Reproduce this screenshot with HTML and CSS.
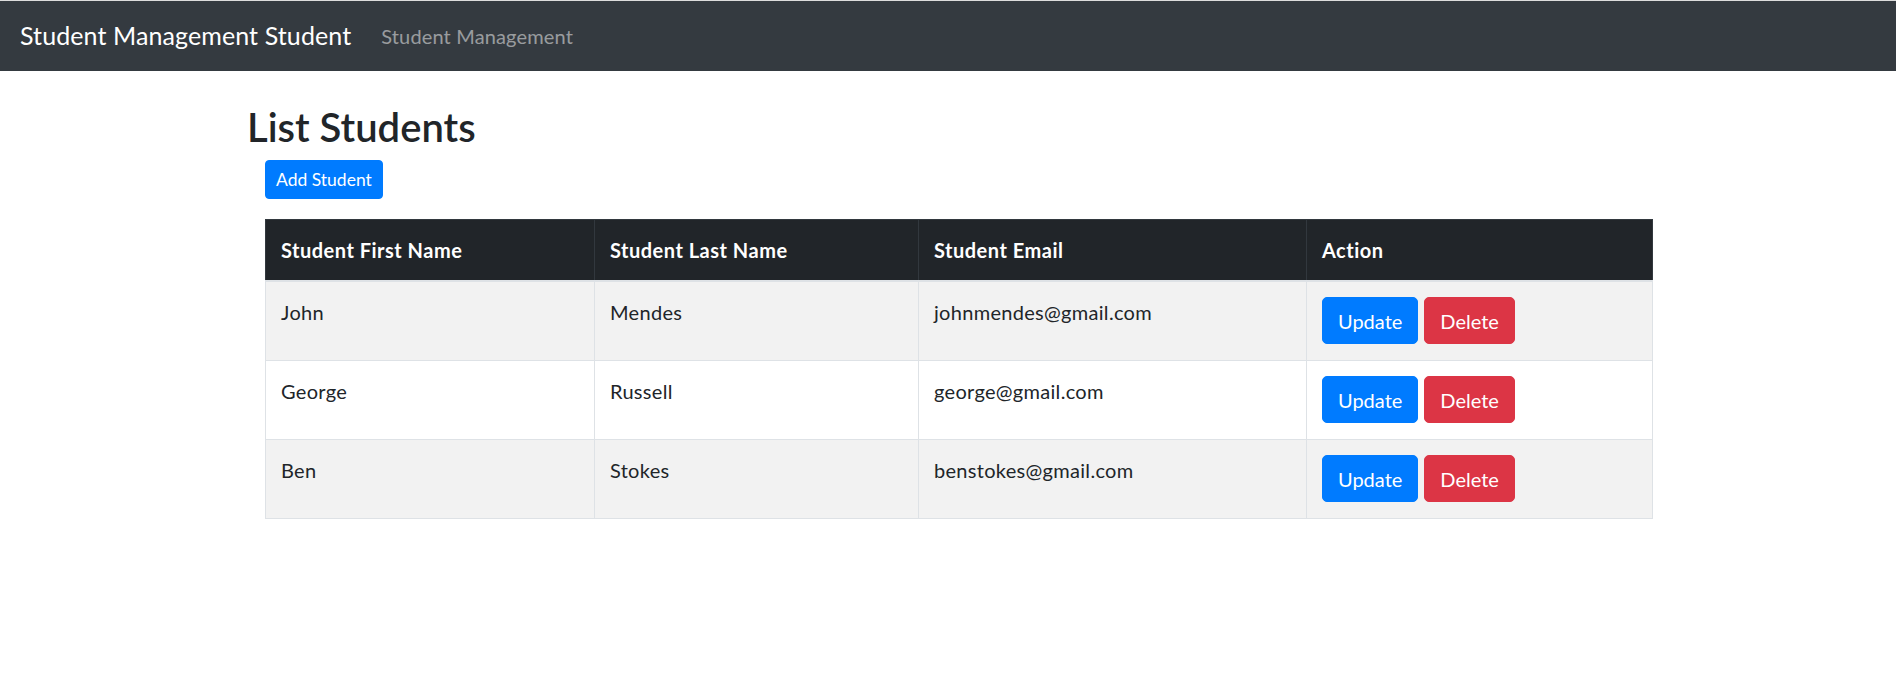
FILE: index.html
```html
<!DOCTYPE html>
<html lang="en">
<head>
<meta charset="utf-8">
<title>Student Management</title>
<link rel="stylesheet" href="styles.css">
</head>
<body>
<header class="navbar">
  <a class="brand" href="#">Student Management Student</a>
  <a class="nav-link" href="#">Student Management</a>
</header>
<main class="container">
  <h1 class="title">List Students</h1>
  <div class="content">
    <button class="btn btn-primary btn-sm">Add Student</button>
    <table class="table">
      <colgroup>
        <col class="c1"><col class="c2"><col class="c3"><col class="c4">
      </colgroup>
      <thead>
        <tr>
          <th>Student First Name</th>
          <th>Student Last Name</th>
          <th>Student Email</th>
          <th>Action</th>
        </tr>
      </thead>
      <tbody>
        <tr>
          <td>John</td>
          <td>Mendes</td>
          <td>johnmendes@gmail.com</td>
          <td><div class="actions"><button class="btn btn-primary">Update</button><button class="btn btn-danger">Delete</button></div></td>
        </tr>
        <tr>
          <td>George</td>
          <td>Russell</td>
          <td>george@gmail.com</td>
          <td><div class="actions"><button class="btn btn-primary">Update</button><button class="btn btn-danger">Delete</button></div></td>
        </tr>
        <tr>
          <td>Ben</td>
          <td>Stokes</td>
          <td>benstokes@gmail.com</td>
          <td><div class="actions"><button class="btn btn-primary">Update</button><button class="btn btn-danger">Delete</button></div></td>
        </tr>
      </tbody>
    </table>
  </div>
</main>
</body>
</html>
```
FILE: styles.css
```css
* { box-sizing: border-box; }
html, body { margin: 0; padding: 0; }
body {
  font-family: "Lato", "Liberation Sans", sans-serif;
  font-size: 20px;
  line-height: 30px;
  color: #212529;
  background: #fff;
}
.navbar {
  display: flex;
  align-items: center;
  height: 71px;
  padding: 0 20px;
  background: #343a40;
  border-top: 1px solid #dcdcdc;
}
.brand {
  font-size: 25px;
  line-height: 37.5px;
  letter-spacing: 0.1px;
  color: #fff;
  text-decoration: none;
  margin-right: 20px;
}
.nav-link {
  font-size: 20px;
  line-height: 30px;
  letter-spacing: 0.15px;
  padding: 0 10px;
  color: rgba(255,255,255,.5);
  text-decoration: none;
}
.container {
  padding-left: 247px;
}
.title {
  margin: 32px 0 9px;
  font-size: 40px;
  line-height: 48px;
  font-weight: 600;
}
.content {
  margin-left: 18px;
}
.btn {
  display: inline-block;
  font-family: inherit;
  font-size: 20px;
  line-height: 30px;
  padding: 7.5px 15px;
  border: 1px solid transparent;
  border-radius: 5px;
  color: #fff;
  cursor: pointer;
  text-align: center;
}
.btn-sm {
  font-size: 17.5px;
  line-height: 27px;
  padding: 5px 10px;
  border-radius: 4px;
}
.btn-primary { background: #007bff; border-color: #007bff; }
.btn-danger { background: #dc3545; border-color: #dc3545; }
.table {
  margin-top: 20px;
  width: 1387px;
  table-layout: fixed;
  border-collapse: collapse;
  border: 1px solid #dee2e6;
}
.c1 { width: 329px; }
.c2 { width: 324px; }
.c3 { width: 388px; }
.c4 { width: 346px; }
.table th {
  background: #212529;
  color: #fff;
  font-weight: 700;
  letter-spacing: 0.5px;
  text-align: left;
  vertical-align: bottom;
  padding: 15px;
  border: 1px solid #32383e;
  border-bottom: 2px solid #dee2e6;
}
.table td {
  padding: 15px 15px 16px;
  vertical-align: top;
  letter-spacing: 0.3px;
  border: 1px solid #dee2e6;
}
.table td .btn { letter-spacing: 0; }
.table tbody tr:nth-child(odd) { background: #f2f2f2; }
.actions {
  display: flex;
  gap: 6px;
}
```
